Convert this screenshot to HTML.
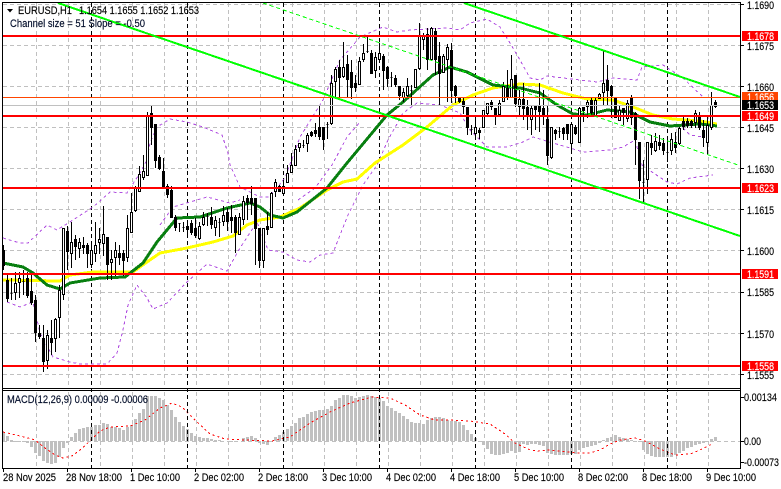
<!DOCTYPE html>
<html><head><meta charset="utf-8"><style>
html,body{margin:0;padding:0;background:#fff;width:781px;height:489px;overflow:hidden}
svg{display:block}
text{font-family:"Liberation Sans",sans-serif;font-size:11px;fill:#000;stroke:#000;stroke-width:.15}
.w{fill:#fff;stroke:#fff}
.n{fill:none}
</style></head><body>
<svg width="781" height="489" viewBox="0 0 781 489" xmlns="http://www.w3.org/2000/svg">
<rect width="781" height="489" fill="#fff"/>
<g shape-rendering="crispEdges">
<path class="n" stroke="#c0c0c0" stroke-dasharray="4 3" d="M3 4.5H740M3 45.5H740M3 86.5H740M3 127.5H740M3 168.5H740M3 209.5H740M3 250.5H740M3 292.5H740M3 333.5H740M3 374.5H740M3 441.5H740"/>
<path class="n" stroke="#c0c0c0" stroke-dasharray="4 3" d="M36.5 3V388M68.5 3V388M100.5 3V388M132.5 3V388M164.5 3V388M196.5 3V388M228.5 3V388M260.5 3V388M292.5 3V388M324.5 3V388M356.5 3V388M388.5 3V388M420.5 3V388M452.5 3V388M484.5 3V388M516.5 3V388M548.5 3V388M580.5 3V388M612.5 3V388M644.5 3V388M676.5 3V388M708.5 3V388M36.5 392V468M68.5 392V468M100.5 392V468M132.5 392V468M164.5 392V468M196.5 392V468M228.5 392V468M260.5 392V468M292.5 392V468M324.5 392V468M356.5 392V468M388.5 392V468M420.5 392V468M452.5 392V468M484.5 392V468M516.5 392V468M548.5 392V468M580.5 392V468M612.5 392V468M644.5 392V468M676.5 392V468M708.5 392V468"/>
<path class="n" stroke="#c0c0c0" stroke-width="3" d="M3.5 441V432M7.5 441V436M11.5 441V440M15.5 441V442M19.5 441V442M23.5 441V442M27.5 441V443M31.5 441V447M35.5 441V453M39.5 441V456M43.5 441V461M47.5 441V463M51.5 441V464M55.5 441V463M59.5 441V457M63.5 441V448M67.5 441V443M71.5 441V437M75.5 441V433M79.5 441V429M83.5 441V428M87.5 441V427M91.5 441V427M95.5 441V425M99.5 441V425M103.5 441V423M107.5 441V424M111.5 441V427M115.5 441V427M119.5 441V428M123.5 441V430M127.5 441V427M131.5 441V425M135.5 441V419M139.5 441V413M143.5 441V409M147.5 441V396M151.5 441V396M155.5 441V396M159.5 441V398M163.5 441V400M167.5 441V405M171.5 441V410M175.5 441V417M179.5 441V422M183.5 441V426M187.5 441V429M191.5 441V433M195.5 441V436M199.5 441V437M203.5 441V438M207.5 441V438M211.5 441V439M215.5 441V440M219.5 441V440M223.5 441V441M227.5 441V441M231.5 441V442M235.5 441V442M239.5 441V441M243.5 441V438M247.5 441V437M251.5 441V436M255.5 441V438M259.5 441V443M263.5 441V444M267.5 441V445M271.5 441V441M275.5 441V437M279.5 441V435M283.5 441V432M287.5 441V429M291.5 441V426M295.5 441V423M299.5 441V418M303.5 441V417M307.5 441V414M311.5 441V412M315.5 441V411M319.5 441V410M323.5 441V410M327.5 441V409M331.5 441V406M335.5 441V400M339.5 441V398M343.5 441V395M347.5 441V395M351.5 441V396M355.5 441V398M359.5 441V397M363.5 441V396M367.5 441V395M371.5 441V396M375.5 441V397M379.5 441V398M383.5 441V401M387.5 441V406M391.5 441V408M395.5 441V411M399.5 441V413M403.5 441V416M407.5 441V419M411.5 441V422M415.5 441V423M419.5 441V423M423.5 441V424M427.5 441V420M431.5 441V418M435.5 441V417M439.5 441V417M443.5 441V418M447.5 441V420M451.5 441V421M455.5 441V421M459.5 441V422M463.5 441V425M467.5 441V430M471.5 441V434M475.5 441V438M479.5 441V442M483.5 441V445M487.5 441V449M491.5 441V454M495.5 441V455M499.5 441V455M503.5 441V454M507.5 441V453M511.5 441V451M515.5 441V453M519.5 441V452M523.5 441V444M527.5 441V445M531.5 441V444M535.5 441V444M539.5 441V445M543.5 441V446M547.5 441V453M551.5 441V454M555.5 441V455M559.5 441V455M563.5 441V455M567.5 441V455M571.5 441V454M575.5 441V454M579.5 441V450M583.5 441V448M587.5 441V447M591.5 441V446M595.5 441V445M599.5 441V443M603.5 441V440M607.5 441V438M611.5 441V437M615.5 441V435M619.5 441V437M623.5 441V438M627.5 441V439M631.5 441V440M635.5 441V441M639.5 441V442M643.5 441V450M647.5 441V454M651.5 441V456M655.5 441V457M659.5 441V457M663.5 441V457M667.5 441V457M671.5 441V457M675.5 441V455M679.5 441V453M683.5 441V451M687.5 441V448M691.5 441V447M695.5 441V445M699.5 441V444M703.5 441V443M707.5 441V442M711.5 441V439M715.5 441V437"/>
<path class="n" stroke="#f00" stroke-width="1" stroke-dasharray="2 3" d="M3 432L12 434L28 438L35 440L45 448L55 455L63 458L72 456L80 450L90 441L100 431L110 427L130 426L145 420L160 408L172 403L182 407L195 420L210 434L225 439L245 440L272 441L290 437L310 423L330 412L350 403L372 397L390 398L405 405L420 415L435 420L450 420L470 421L490 424L505 434L515 443L530 450L540 451L550 450L560 451L580 453L590 453L600 450L610 444L620 440L635 438L645 441L660 449L675 455L690 454L700 450L712 444"/>
<path class="n" stroke="#000" stroke-dasharray="4 3" d="M91.5 3V468M187.5 3V468M283.5 3V468M379.5 3V468M475.5 3V468M571.5 3V468M667.5 3V468"/>

<!-- purple bands -->
<g stroke="#b04fe0" stroke-width="1" stroke-dasharray="3 3" fill="none">
<path d="M3 238L20 243L28 243L47 225L57 230L73 220L93 207L110 192L127 193L140 173L147 160L150 143L157 127L170 119L187 122L203 127L222 135L228 153L230 165L240 187L260 197L268 197L277 188L285 178L300 137L323 100L340 60L360 37L383 27L397 32L410 30L447 28L460 30L470 23L487 19L500 27L510 43L520 60L530 78L540 80L547 76L580 80L597 82L613 78L637 80L642 67L663 65L683 78L703 97"/>
<path d="M7 302L20 307L33 302L40 333L53 357L70 362L80 364L107 364L117 353L123 330L128 305L137 285L147 298L153 309L167 303L187 282L207 264L227 271L240 248L257 222L268 250L283 252L297 260L310 262L320 255L333 253L340 235L348 215L363 185L377 165L388 140L403 113L417 103L440 105L460 113L470 130L487 147L507 147L523 142L533 137L553 143L570 148L583 152L610 150L623 147L635 140L642 165L652 172L667 182L677 184L690 178L713 175"/>
<path d="M160 225L173 207L207 197L230 203L240 200M298 200L315 188L332 165L347 137L360 122M683 128L690 135L703 137"/>
</g>

<!-- moving averages -->
<path class="n" stroke="#ffff00" stroke-width="3" stroke-linejoin="round" d="M3 280L60 281L70 275L93 272L133 272L147 262L160 253L187 248L213 242L233 236L247 225L260 220L280 217L300 208L327 190L343 182L357 179L375 163L403 145L427 127L453 105L473 95L493 88L520 84L540 85L563 93L587 99L613 100L633 107L653 115L673 119L700 121L717 124"/>
<path class="n" stroke="#087f10" stroke-width="3" stroke-linejoin="round" d="M3 263L23 267L33 273L47 285L60 289L70 283L100 278L125 277L143 263L157 242L177 218L200 217L227 208L250 203L260 207L270 215L283 218L297 212L327 188L347 163L377 127L387 115L403 102L433 75L450 67L467 72L493 85L520 88L540 93L557 105L573 114L587 115L607 110L630 112L650 122L670 126L700 124L717 126"/>

<!-- candles -->
<path class="n" stroke="#000" d="M3.5 245V270M7.5 275V302M11.5 278V300M15.5 272V300M19.5 272V298M23.5 270V295M27.5 272V298M31.5 273V305M35.5 295V342M39.5 325V339M43.5 325V372M47.5 330V369M51.5 320V355M55.5 318V352M59.5 285V338M63.5 228V300M67.5 226V270M71.5 222V268M75.5 235V260M79.5 238V258M83.5 237V254M87.5 243V268M91.5 243V268M95.5 222V262M99.5 228V254M103.5 206V256M107.5 237V280M111.5 250V280M115.5 242V276M119.5 245V265M123.5 250V276M127.5 215V262M131.5 193V232M135.5 186V212M139.5 166V192M143.5 155V180M147.5 112V176M151.5 105V145M155.5 124V168M159.5 155V170M163.5 158V188M167.5 184V198M171.5 186V217M175.5 215V231M179.5 223V232M183.5 222V232M187.5 221V234M191.5 220V235M195.5 218V238M199.5 222V240M203.5 212V226M207.5 213V226M211.5 207V229M215.5 216V236M219.5 218V237M223.5 206V226M227.5 208V231M231.5 205V233M235.5 215V253M239.5 213V235M243.5 196V225M247.5 195V220M251.5 186V215M255.5 198V265M259.5 228V268M263.5 228V268M267.5 212V235M271.5 192V228M275.5 179V197M279.5 185V192M283.5 180V195M287.5 165V183M291.5 153V172M295.5 145V165M299.5 143V152M303.5 140V148M307.5 133V152M311.5 131V137M315.5 123V137M319.5 105V140M323.5 127V150M327.5 122V139M331.5 75V125M335.5 67V98M339.5 60V98M343.5 42V78M347.5 55V98M351.5 60V99M355.5 75V92M359.5 57V85M363.5 44V62M367.5 35V53M371.5 50V73M375.5 52V78M379.5 43V62M383.5 54V90M387.5 66V87M391.5 72V87M395.5 75V87M399.5 86V100M403.5 88V102M407.5 78V97M411.5 85V106M415.5 69V88M419.5 23V70M423.5 33V50M427.5 28V70M431.5 27V60M435.5 28V75M439.5 42V105M443.5 54V73M447.5 44V102M451.5 43V103M455.5 85V103M459.5 97V103M463.5 97V114M467.5 107V135M471.5 125V135M475.5 115V138M479.5 128V139M483.5 110V128M487.5 103V115M491.5 100V110M495.5 108V125M499.5 100V115M503.5 82V102M507.5 70V100M511.5 55V97M515.5 75V107M519.5 90V115M523.5 83V120M527.5 100V130M531.5 105V135M535.5 105V130M539.5 83V132M543.5 90V125M547.5 105V165M551.5 127V159M555.5 129V140M559.5 127V138M563.5 127V140M567.5 125V140M571.5 124V152M575.5 125V135M579.5 107V143M583.5 107V122M587.5 100V118M591.5 97V117M595.5 98V117M599.5 93V99M603.5 50V105M607.5 65V105M611.5 85V118M615.5 97V118M619.5 105V120M623.5 110V125M627.5 100V122M631.5 95V125M635.5 112V165M639.5 142V199M643.5 160V203M647.5 142V194M651.5 135V155M655.5 133V152M659.5 135V150M663.5 138V155M667.5 140V162M671.5 133V155M675.5 132V153M679.5 127V145M683.5 117V130M687.5 118V128M691.5 120V128M695.5 110V128M699.5 112V130M703.5 120V147M707.5 117V155M711.5 92V130M715.5 100V108"/>
<path fill="#fff" stroke="#000" d="M14.5 283.5h2V292.5h-2zM18.5 278.5h2V282.5h-2zM46.5 335.5h2V360.5h-2zM54.5 319.5h2V338.5h-2zM58.5 290.5h2V317.5h-2zM62.5 228.5h2V294.5h-2zM70.5 242.5h2V253.5h-2zM78.5 242.5h2V248.5h-2zM90.5 250.5h2V264.5h-2zM94.5 245.5h2V253.5h-2zM98.5 239.5h2V242.5h-2zM102.5 234.5h2V243.5h-2zM110.5 259.5h2V262.5h-2zM114.5 250.5h2V257.5h-2zM126.5 228.5h2V257.5h-2zM130.5 212.5h2V232.5h-2zM134.5 187.5h2V210.5h-2zM138.5 174.5h2V191.5h-2zM142.5 171.5h2V177.5h-2zM146.5 115.5h2V175.5h-2zM198.5 226.5h2V238.5h-2zM202.5 217.5h2V224.5h-2zM214.5 220.5h2V227.5h-2zM222.5 215.5h2V221.5h-2zM238.5 217.5h2V234.5h-2zM242.5 201.5h2V219.5h-2zM262.5 228.5h2V260.5h-2zM270.5 193.5h2V227.5h-2zM274.5 182.5h2V191.5h-2zM282.5 186.5h2V193.5h-2zM286.5 173.5h2V182.5h-2zM290.5 165.5h2V172.5h-2zM294.5 149.5h2V165.5h-2zM298.5 143.5h2V147.5h-2zM306.5 135.5h2V143.5h-2zM330.5 83.5h2V123.5h-2zM334.5 69.5h2V81.5h-2zM342.5 67.5h2V76.5h-2zM358.5 61.5h2V84.5h-2zM362.5 53.5h2V59.5h-2zM374.5 57.5h2V70.5h-2zM378.5 53.5h2V59.5h-2zM402.5 92.5h2V97.5h-2zM406.5 86.5h2V95.5h-2zM414.5 69.5h2V87.5h-2zM418.5 36.5h2V68.5h-2zM422.5 36.5h2V39.5h-2zM430.5 28.5h2V59.5h-2zM442.5 56.5h2V72.5h-2zM446.5 47.5h2V59.5h-2zM474.5 127.5h2V133.5h-2zM482.5 110.5h2V127.5h-2zM486.5 103.5h2V113.5h-2zM498.5 103.5h2V114.5h-2zM502.5 86.5h2V101.5h-2zM510.5 79.5h2V97.5h-2zM518.5 99.5h2V106.5h-2zM530.5 108.5h2V119.5h-2zM550.5 127.5h2V157.5h-2zM570.5 124.5h2V143.5h-2zM578.5 108.5h2V142.5h-2zM586.5 102.5h2V106.5h-2zM594.5 100.5h2V115.5h-2zM598.5 94.5h2V98.5h-2zM602.5 83.5h2V92.5h-2zM618.5 110.5h2V120.5h-2zM626.5 103.5h2V118.5h-2zM646.5 142.5h2V179.5h-2zM654.5 141.5h2V150.5h-2zM670.5 139.5h2V150.5h-2zM678.5 128.5h2V143.5h-2zM694.5 113.5h2V122.5h-2zM706.5 125.5h2V142.5h-2zM710.5 105.5h2V127.5h-2z"/>
<path fill="#000" stroke="#000" d="M2.5 250.5h2V265.5h-2zM6.5 280.5h2V298.5h-2zM10.5 293.5h2zM22.5 281.5h2zM26.5 278.5h2V295.5h-2zM30.5 291.5h2V302.5h-2zM34.5 300.5h2V332.5h-2zM38.5 333.5h2V336.5h-2zM42.5 338.5h2V361.5h-2zM50.5 338.5h2V342.5h-2zM66.5 231.5h2V251.5h-2zM74.5 239.5h2V246.5h-2zM82.5 245.5h2V247.5h-2zM86.5 245.5h2V253.5h-2zM106.5 237.5h2V264.5h-2zM118.5 253.5h2V257.5h-2zM122.5 253.5h2V260.5h-2zM150.5 113.5h2V127.5h-2zM154.5 124.5h2V160.5h-2zM158.5 157.5h2V168.5h-2zM162.5 171.5h2V186.5h-2zM166.5 186.5h2V194.5h-2zM170.5 190.5h2V217.5h-2zM174.5 217.5h2V227.5h-2zM178.5 223.5h2zM182.5 227.5h2zM186.5 226.5h2V229.5h-2zM190.5 223.5h2V232.5h-2zM194.5 228.5h2V235.5h-2zM206.5 216.5h2zM210.5 217.5h2V224.5h-2zM218.5 222.5h2zM226.5 212.5h2V221.5h-2zM230.5 217.5h2V220.5h-2zM234.5 217.5h2V232.5h-2zM246.5 198.5h2V202.5h-2zM250.5 198.5h2V203.5h-2zM254.5 198.5h2V228.5h-2zM258.5 228.5h2V260.5h-2zM266.5 226.5h2V229.5h-2zM278.5 186.5h2V191.5h-2zM302.5 145.5h2zM310.5 132.5h2V135.5h-2zM314.5 130.5h2V133.5h-2zM318.5 127.5h2V136.5h-2zM322.5 127.5h2V139.5h-2zM326.5 124.5h2zM338.5 67.5h2V77.5h-2zM346.5 64.5h2V79.5h-2zM350.5 72.5h2V87.5h-2zM354.5 83.5h2V87.5h-2zM366.5 51.5h2zM370.5 53.5h2V73.5h-2zM382.5 56.5h2V70.5h-2zM386.5 67.5h2V78.5h-2zM390.5 77.5h2zM394.5 78.5h2V84.5h-2zM398.5 86.5h2V95.5h-2zM410.5 90.5h2zM426.5 34.5h2V59.5h-2zM434.5 31.5h2V59.5h-2zM438.5 56.5h2V73.5h-2zM450.5 50.5h2V90.5h-2zM454.5 86.5h2V95.5h-2zM458.5 97.5h2V101.5h-2zM462.5 101.5h2V106.5h-2zM466.5 107.5h2V127.5h-2zM470.5 129.5h2zM478.5 130.5h2V132.5h-2zM490.5 102.5h2V106.5h-2zM494.5 108.5h2V116.5h-2zM506.5 88.5h2V96.5h-2zM514.5 75.5h2V103.5h-2zM522.5 99.5h2V108.5h-2zM526.5 107.5h2V115.5h-2zM534.5 105.5h2V109.5h-2zM538.5 106.5h2V111.5h-2zM542.5 108.5h2V115.5h-2zM546.5 119.5h2V155.5h-2zM554.5 130.5h2V133.5h-2zM558.5 131.5h2zM562.5 128.5h2V133.5h-2zM566.5 124.5h2V133.5h-2zM574.5 127.5h2V133.5h-2zM582.5 107.5h2V110.5h-2zM590.5 100.5h2V112.5h-2zM606.5 80.5h2V90.5h-2zM610.5 86.5h2V95.5h-2zM614.5 97.5h2V117.5h-2zM622.5 108.5h2V112.5h-2zM630.5 97.5h2V117.5h-2zM634.5 113.5h2V139.5h-2zM638.5 142.5h2V180.5h-2zM642.5 182.5h2zM650.5 143.5h2V147.5h-2zM658.5 142.5h2V145.5h-2zM662.5 143.5h2V150.5h-2zM666.5 152.5h2zM674.5 142.5h2V147.5h-2zM682.5 121.5h2V126.5h-2zM686.5 121.5h2V125.5h-2zM690.5 121.5h2V125.5h-2zM698.5 116.5h2V127.5h-2zM702.5 130.5h2V137.5h-2zM714.5 102.5h2V106.5h-2z"/>
<!-- level lines -->
<path class="n" stroke="#c0c0c0" d="M3 105.5H740"/>
<path class="n" stroke="#ff4500" d="M3 97.5H740"/>
<path class="n" stroke="#ff0000" stroke-width="2" d="M3 36H740M3 116H740M3 188H740M3 274H740M3 366H740"/>

<!-- channel -->
<path class="n" stroke="#00ff00" stroke-width="2" d="M464 3L740 97M58 3L740 236"/>
<path class="n" stroke="#00ff00" stroke-width="1" stroke-dasharray="4 3" d="M263 3L738 165"/>

<!-- frame -->
<path class="n" stroke="#000" d="M2.5 2V468.5M2 2.5H740.5M2 388.5H740.5M2 390.5H740.5M2 468.5H741M740.5 2V468.5"/>
<path class="n" stroke="#000" d="M741 4.5h3M741 45.5h3M741 86.5h3M741 127.5h3M741 168.5h3M741 209.5h3M741 250.5h3M741 292.5h3M741 333.5h3M741 374.5h3M741 397.5h3M741 441.5h3M741 462.5h3M3.5 469v3M67.5 469v3M131.5 469v3M195.5 469v3M259.5 469v3M323.5 469v3M387.5 469v3M451.5 469v3M515.5 469v3M579.5 469v3M643.5 469v3M707.5 469v3"/>
</g>

<!-- labels -->
<polygon points="7,9 13,9 10,12.5" fill="#000"/>
<text x="18" y="14" textLength="54" lengthAdjust="spacingAndGlyphs">EURUSD,H1</text>
<text x="79" y="14" textLength="120" lengthAdjust="spacingAndGlyphs">1.1654 1.1655 1.1652 1.1653</text>
<text x="10" y="27" textLength="135" lengthAdjust="spacingAndGlyphs" style="fill:#001038">Channel size = 51 Slope = -0.50</text>
<text x="7" y="403" textLength="141" lengthAdjust="spacingAndGlyphs" style="fill:#001038">MACD(12,26,9) 0.00009 -0.00006</text>

<g>
<text x="747" y="9" textLength="27" lengthAdjust="spacingAndGlyphs">1.1690</text>
<text x="747" y="50" textLength="27" lengthAdjust="spacingAndGlyphs">1.1675</text>
<text x="747" y="91" textLength="27" lengthAdjust="spacingAndGlyphs">1.1660</text>
<text x="747" y="132" textLength="27" lengthAdjust="spacingAndGlyphs">1.1645</text>
<text x="747" y="173" textLength="27" lengthAdjust="spacingAndGlyphs">1.1630</text>
<text x="747" y="214" textLength="27" lengthAdjust="spacingAndGlyphs">1.1615</text>
<text x="747" y="255" textLength="27" lengthAdjust="spacingAndGlyphs">1.1600</text>
<text x="747" y="296" textLength="27" lengthAdjust="spacingAndGlyphs">1.1585</text>
<text x="747" y="338" textLength="27" lengthAdjust="spacingAndGlyphs">1.1570</text>
<text x="747" y="379" textLength="27" lengthAdjust="spacingAndGlyphs">1.1555</text>
</g>
<g shape-rendering="crispEdges">
<rect x="742" y="31" width="36" height="10" fill="#f00"/>
<rect x="742" y="92" width="36" height="9" fill="#ff4500"/>
<rect x="742" y="111" width="36" height="10" fill="#f00"/>
<rect x="742" y="183" width="36" height="10" fill="#f00"/>
<rect x="742" y="269" width="36" height="10" fill="#f00"/>
<rect x="742" y="361" width="36" height="10" fill="#f00"/>
</g>
<text class="w" x="747" y="40" textLength="27" lengthAdjust="spacingAndGlyphs">1.1678</text>
<text class="w" x="747" y="101" textLength="27" lengthAdjust="spacingAndGlyphs">1.1656</text>
<text class="w" x="747" y="120" textLength="27" lengthAdjust="spacingAndGlyphs">1.1649</text>
<text class="w" x="747" y="192" textLength="27" lengthAdjust="spacingAndGlyphs">1.1623</text>
<text class="w" x="747" y="278" textLength="27" lengthAdjust="spacingAndGlyphs">1.1591</text>
<text class="w" x="747" y="370" textLength="27" lengthAdjust="spacingAndGlyphs">1.1558</text>
<rect x="742" y="100" width="36" height="10" fill="#000" shape-rendering="crispEdges"/>
<text class="w" x="747" y="109" textLength="27" lengthAdjust="spacingAndGlyphs">1.1653</text>

<text x="744" y="401" textLength="33" lengthAdjust="spacingAndGlyphs">0.00134</text>
<text x="744" y="445" textLength="17" lengthAdjust="spacingAndGlyphs">0.00</text>
<text x="744" y="466" textLength="35" lengthAdjust="spacingAndGlyphs">-0.00073</text>

<text x="3" y="481" textLength="53" lengthAdjust="spacingAndGlyphs">28 Nov 2025</text>
<text x="66" y="481" textLength="56" lengthAdjust="spacingAndGlyphs">28 Nov 18:00</text>
<text x="130" y="481" textLength="50" lengthAdjust="spacingAndGlyphs">1 Dec 10:00</text>
<text x="194" y="481" textLength="50" lengthAdjust="spacingAndGlyphs">2 Dec 02:00</text>
<text x="258" y="481" textLength="50" lengthAdjust="spacingAndGlyphs">2 Dec 18:00</text>
<text x="322" y="481" textLength="50" lengthAdjust="spacingAndGlyphs">3 Dec 10:00</text>
<text x="386" y="481" textLength="50" lengthAdjust="spacingAndGlyphs">4 Dec 02:00</text>
<text x="450" y="481" textLength="50" lengthAdjust="spacingAndGlyphs">4 Dec 18:00</text>
<text x="514" y="481" textLength="50" lengthAdjust="spacingAndGlyphs">5 Dec 10:00</text>
<text x="578" y="481" textLength="50" lengthAdjust="spacingAndGlyphs">8 Dec 02:00</text>
<text x="642" y="481" textLength="50" lengthAdjust="spacingAndGlyphs">8 Dec 18:00</text>
<text x="706" y="481" textLength="50" lengthAdjust="spacingAndGlyphs">9 Dec 10:00</text>
</svg>
</body></html>
